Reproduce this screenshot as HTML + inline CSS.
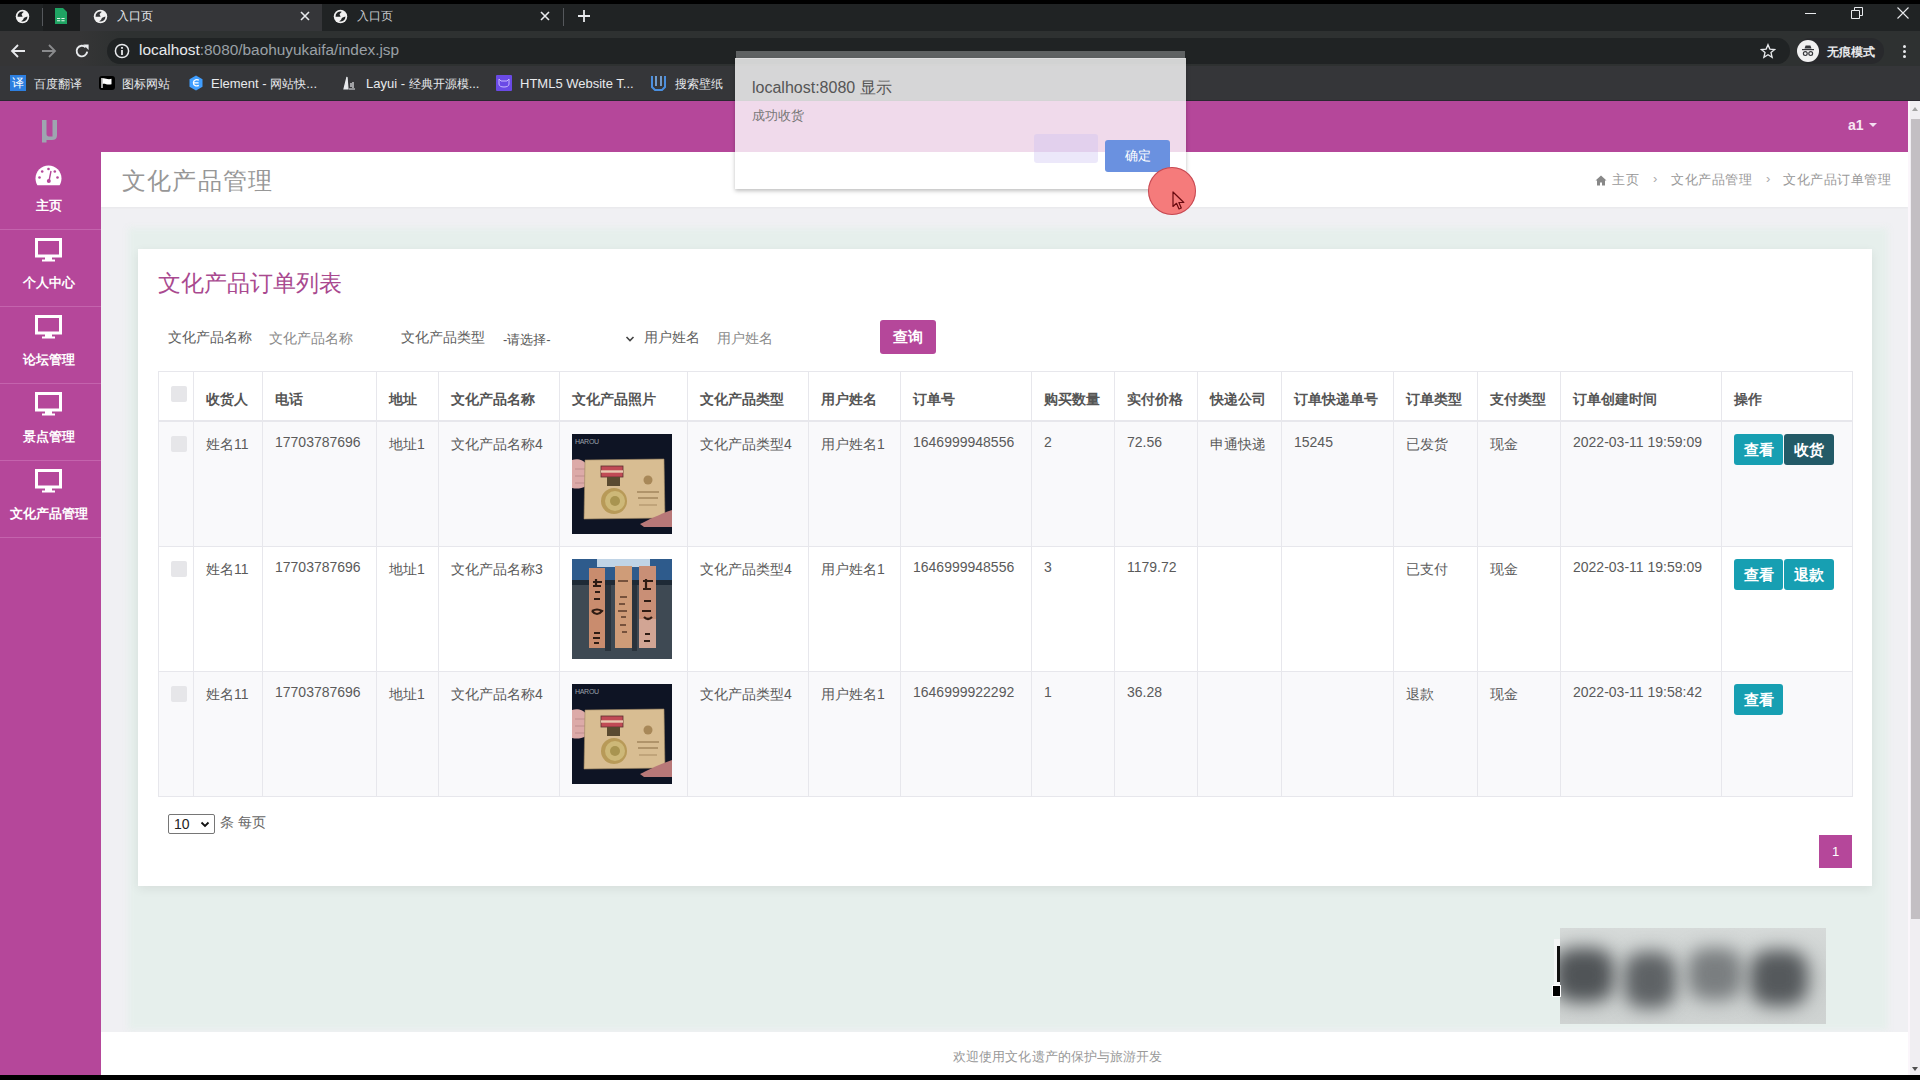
<!DOCTYPE html>
<html><head><meta charset="utf-8">
<style>
*{box-sizing:border-box;margin:0;padding:0}
html,body{width:1920px;height:1080px;overflow:hidden;background:#000;font-family:"Liberation Sans",sans-serif}
.a{position:absolute}
#tabs{left:0;top:4px;width:1920px;height:27px;background:#202324}
#toolbar{left:0;top:31px;width:1920px;height:70px;background:#353639}
#omni{left:107px;top:38px;width:1683px;height:26px;border-radius:13px;background:#202324}
.wt{color:#e8eaed;font-size:12px;white-space:nowrap}
#page{left:0;top:101px;width:1920px;height:974px;background:#f0f0f3;overflow:hidden}
#header{left:0;top:0;width:1908px;height:51px;background:#b5479a}
#side{left:0;top:0;width:101px;height:974px;background:#b5479a}
.sep{left:0;width:101px;height:1px;background:#c463ad}
.sl{left:0;width:97px;text-align:center;font-size:13px;color:#fff;white-space:nowrap;font-weight:bold}
.mon{left:35px}
#titlebar{left:101px;top:51px;width:1807px;height:55px;background:#fff;box-shadow:0 1px 2px rgba(0,0,0,.04)}
#card{left:138px;top:148px;width:1734px;height:637px;background:#fff;box-shadow:0 3px 10px rgba(0,0,0,.07)}
#footer{left:101px;top:931px;width:1807px;height:43px;background:#fff}
#scroll{left:1908px;top:0;width:12px;height:974px;background:#f0eef2}
.bc{top:19px;font-size:13px;color:#999;white-space:nowrap;letter-spacing:0.5px}
.lbl{font-size:14px;color:#606060;white-space:nowrap}
.ph{font-size:14px;color:#8a8a8a;white-space:nowrap}
.th{font-size:14px;font-weight:bold;color:#555;white-space:nowrap;line-height:20px}
.td{font-size:14px;color:#5a5a5a;white-space:nowrap;line-height:20px}
.cb{width:16px;height:16px;background:#e6e6e9;border-radius:2px}
.btn{height:31px;background:#179fb2;color:#fff;font-size:15px;line-height:31px;text-align:center;border-radius:3px;font-weight:bold}
.blob{border-radius:35%;filter:blur(9px)}
</style></head>
<body>
<!-- CHROME -->
<div class="a" id="tabs"></div>
<div class="a" style="left:43px;top:4px;width:37px;height:27px;background:#1b1d1e"></div>
<div class="a" style="left:42px;top:8px;width:1px;height:18px;background:#55585c"></div>
<div class="a" style="left:80px;top:4px;width:242px;height:27px;background:#353639"></div>
<div class="a" style="left:563px;top:8px;width:1px;height:18px;background:#55585c"></div>
<div class="a" id="toolbar"></div>
<div class="a" style="left:0;top:31px;width:1920px;height:35px;background:linear-gradient(90deg,#353536 0,#353536 80px,#2e3131 120px,#2e3131 100%)"></div>
<!-- globe icons -->
<svg class="a" style="left:15px;top:9px" width="15" height="15" viewBox="0 0 16 16"><circle cx="8" cy="8" r="7.2" fill="#f1f1f1"/><path d="M2.7 8.2A5.3 5.3 0 0 1 9.3 2.8C8.6 3.9 7.3 4.5 7.1 5.6C6.9 6.8 8.3 7.4 8 8.2Z M13.3 7.9A5.3 5.3 0 0 1 6.6 13.2C7.5 12.2 9 11.6 9.1 10.4C9.2 9.2 11.2 8.6 13.3 7.9Z" fill="#202324"/></svg>
<svg class="a" style="left:93px;top:9px" width="15" height="15" viewBox="0 0 16 16"><circle cx="8" cy="8" r="7.2" fill="#f1f1f1"/><path d="M2.7 8.2A5.3 5.3 0 0 1 9.3 2.8C8.6 3.9 7.3 4.5 7.1 5.6C6.9 6.8 8.3 7.4 8 8.2Z M13.3 7.9A5.3 5.3 0 0 1 6.6 13.2C7.5 12.2 9 11.6 9.1 10.4C9.2 9.2 11.2 8.6 13.3 7.9Z" fill="#353639"/></svg>
<svg class="a" style="left:333px;top:9px" width="15" height="15" viewBox="0 0 16 16"><circle cx="8" cy="8" r="7.2" fill="#f1f1f1"/><path d="M2.7 8.2A5.3 5.3 0 0 1 9.3 2.8C8.6 3.9 7.3 4.5 7.1 5.6C6.9 6.8 8.3 7.4 8 8.2Z M13.3 7.9A5.3 5.3 0 0 1 6.6 13.2C7.5 12.2 9 11.6 9.1 10.4C9.2 9.2 11.2 8.6 13.3 7.9Z" fill="#202324"/></svg>
<!-- sheets icon -->
<svg class="a" style="left:54px;top:8px" width="14" height="16" viewBox="0 0 14 16"><path d="M1 0 H9 L13 4 V16 H1 Z" fill="#1fa463"/><path d="M3 10.5h3.2M7.4 10.5h3.2M3 12.8h3.2M7.4 12.8h3.2" stroke="#e6f4ea" stroke-width="1.1"/></svg>
<div class="a wt" style="left:117px;top:8px;font-size:12px">入口页</div>
<div class="a wt" style="left:357px;top:8px;font-size:12px;color:#c9cbce">入口页</div>
<svg class="a" style="left:300px;top:11px" width="10" height="10" viewBox="0 0 10 10"><path d="M1 1L9 9M9 1L1 9" stroke="#e8eaed" stroke-width="1.6"/></svg>
<svg class="a" style="left:540px;top:11px" width="10" height="10" viewBox="0 0 10 10"><path d="M1 1L9 9M9 1L1 9" stroke="#e8eaed" stroke-width="1.6"/></svg>
<svg class="a" style="left:577px;top:9px" width="14" height="14" viewBox="0 0 14 14"><path d="M7 1V13M1 7H13" stroke="#e8eaed" stroke-width="1.8"/></svg>
<!-- window controls -->
<div class="a" style="left:1805px;top:13px;width:11px;height:1px;background:#e8eaed"></div>
<svg class="a" style="left:1851px;top:7px" width="12" height="12" viewBox="0 0 12 12"><path d="M0.5 3.5h8v8h-8z M3.5 3.5V0.5h8v8h-3" fill="none" stroke="#e8eaed" stroke-width="1"/></svg>
<svg class="a" style="left:1897px;top:7px" width="12" height="12" viewBox="0 0 12 12"><path d="M0.5 0.5L11.5 11.5M11.5 0.5L0.5 11.5" stroke="#e8eaed" stroke-width="1.1"/></svg>
<!-- nav -->
<svg class="a" style="left:10px;top:43px" width="16" height="16" viewBox="0 0 16 16"><path d="M15 8H2M8 2L2 8L8 14" fill="none" stroke="#e8eaed" stroke-width="1.8"/></svg>
<svg class="a" style="left:41px;top:43px" width="16" height="16" viewBox="0 0 16 16"><path d="M1 8H14M8 2L14 8L8 14" fill="none" stroke="#8a8b8d" stroke-width="1.8"/></svg>
<svg class="a" style="left:74px;top:43px" width="16" height="16" viewBox="0 0 16 16"><path d="M13.2 8.6A5.3 5.3 0 1 1 11.6 4.2" fill="none" stroke="#e8eaed" stroke-width="1.9"/><path d="M9.2 1.6H14.6V7Z" fill="#e8eaed"/></svg>
<div class="a" id="omni"></div>
<svg class="a" style="left:114px;top:43px" width="16" height="16" viewBox="0 0 16 16"><circle cx="8" cy="8" r="6.6" fill="none" stroke="#e8eaed" stroke-width="1.5"/><rect x="7.1" y="7" width="1.8" height="5" fill="#e8eaed"/><rect x="7.1" y="4" width="1.8" height="1.8" fill="#e8eaed"/></svg>
<div class="a" style="left:139px;top:41px;font-size:15.4px;color:#e8eaed;white-space:nowrap">localhost<span style="color:#9aa0a6">:8080/baohuyukaifa/index.jsp</span></div>
<svg class="a" style="left:1760px;top:43px" width="16" height="16" viewBox="0 0 24 24"><path d="M12 2.5l2.8 6.6 7.2.6-5.5 4.7 1.7 7-6.2-3.8-6.2 3.8 1.7-7L2 9.7l7.2-.6z" fill="none" stroke="#e8eaed" stroke-width="2"/></svg>
<div class="a" style="left:1797px;top:38px;width:87px;height:26px;border-radius:13px;background:#28292c"></div>
<svg class="a" style="left:1797px;top:40px" width="22" height="22" viewBox="0 0 22 22"><circle cx="11" cy="11" r="11" fill="#f1f1f1"/><path d="M7.5 8.6L8.6 5.6H13.4L14.5 8.6Z" fill="#35363a"/><rect x="5" y="9" width="12" height="1.2" fill="#35363a"/><circle cx="8.3" cy="13.6" r="1.9" fill="none" stroke="#35363a" stroke-width="1.2"/><circle cx="13.7" cy="13.6" r="1.9" fill="none" stroke="#35363a" stroke-width="1.2"/></svg>
<div class="a wt" style="left:1827px;top:44px;font-size:12px;font-weight:bold">无痕模式</div>
<div class="a" style="left:1903px;top:45px;width:3px;height:3px;border-radius:2px;background:#e8eaed"></div>
<div class="a" style="left:1903px;top:50px;width:3px;height:3px;border-radius:2px;background:#e8eaed"></div>
<div class="a" style="left:1903px;top:55px;width:3px;height:3px;border-radius:2px;background:#e8eaed"></div>
<!-- bookmarks -->
<div class="a" style="left:10px;top:75px;width:16px;height:16px;background:#2d7fe0;color:#fff;font-size:12px;line-height:16px;text-align:center">译</div>
<div class="a wt" style="left:34px;top:76px">百度翻译</div>
<svg class="a" style="left:99px;top:75px" width="16" height="16" viewBox="0 0 16 16"><rect x="0" y="1" width="16" height="14" rx="3" fill="#000"/><path d="M3 3V13" stroke="#fff" stroke-width="1.3"/><path d="M3.6 3.5C6 2.5 8 5 12.5 3.8V9.2C8 10.4 6 8 3.6 9Z" fill="#fff"/></svg>
<div class="a wt" style="left:122px;top:76px">图标网站</div>
<svg class="a" style="left:188px;top:75px" width="16" height="16" viewBox="0 0 16 16"><path d="M8 0.5L14.5 4.2V11.8L8 15.5L1.5 11.8V4.2Z" fill="#409eff"/><path d="M10.8 5.3C9.2 4.1 5.6 4.6 5.4 7.6C5.2 10.6 8.6 11.6 10.8 10.4M6 7.9H10.6" fill="none" stroke="#fff" stroke-width="1.3"/></svg>
<div class="a wt" style="left:211px;top:76px"><span style="font-size:13px">Element - </span>网站快<span style="font-size:13px">...</span></div>
<svg class="a" style="left:342px;top:76px" width="16" height="14" viewBox="0 0 16 14"><path d="M2 13L5 1L6 13Z M7 13H13 M9 7V11 M11 6V12" fill="#e8eaed" stroke="#e8eaed" stroke-width="1.2"/></svg>
<div class="a wt" style="left:366px;top:76px"><span style="font-size:13px">Layui - </span>经典开源模<span style="font-size:13px">...</span></div>
<div class="a" style="left:496px;top:75px;width:16px;height:16px;background:#6a4ae6;border-radius:1px"></div>
<svg class="a" style="left:498px;top:78px" width="12" height="10" viewBox="0 0 12 10"><path d="M1 1L3 3H9L11 1V6C11 8 9 9 6 9S1 8 1 6Z" fill="none" stroke="#c8b8ff" stroke-width="1"/></svg>
<div class="a wt" style="left:520px;top:76px"><span style="font-size:13px">HTML5 Website T...</span></div>
<svg class="a" style="left:650px;top:75px" width="17" height="16" viewBox="0 0 17 16"><path d="M2 1V12L5 15H12L15 12V1" fill="none" stroke="#4a8fe0" stroke-width="2"/><path d="M6 1V11M11 1V11" stroke="#7fb5f0" stroke-width="1.6"/></svg>
<div class="a wt" style="left:675px;top:76px">搜索壁纸</div>
<div class="a" style="left:0;top:100px;width:1920px;height:1px;background:#2a2830"></div>
<!-- PAGE -->
<div class="a" id="page">
  <div class="a" id="header"></div>
  <div class="a" id="side"></div>
  <!-- logo -->
  <svg class="a" style="left:40px;top:18px" width="20" height="24" viewBox="0 0 20 24"><path d="M2 1H6.5V15C6.5 17 8 17.5 10 17.5H12.5V1H17V16.5C17 19.5 15 21 12 21H6.5V23.5H2Z" fill="#9ea5b0"/></svg>
  <!-- sidebar separators -->
  <div class="a sep" style="top:128px"></div>
  <div class="a sep" style="top:205px"></div>
  <div class="a sep" style="top:282px"></div>
  <div class="a sep" style="top:359px"></div>
  <div class="a sep" style="top:436px"></div>
  <!-- dashboard icon -->
  <svg class="a" style="left:35px;top:64px" width="27" height="21" viewBox="0 0 27 21"><path d="M13.5 0.5C6.3 0.5 0.5 6.3 0.5 13.5C0.5 16 1.2 18.3 2.4 20.3H24.6C25.8 18.3 26.5 16 26.5 13.5C26.5 6.3 20.7 0.5 13.5 0.5Z" fill="#fff"/><circle cx="13.5" cy="4" r="1.3" fill="#b5479a"/><circle cx="7.2" cy="6.5" r="1.3" fill="#b5479a"/><circle cx="19.8" cy="6.5" r="1.3" fill="#b5479a"/><circle cx="4.5" cy="12.5" r="1.3" fill="#b5479a"/><circle cx="22.5" cy="12.5" r="1.3" fill="#b5479a"/><path d="M16 6L14.2 15" stroke="#b5479a" stroke-width="1.4"/><circle cx="13.8" cy="16" r="2" fill="#b5479a"/></svg>
  <div class="a sl" style="top:96px">主页</div>
  <svg class="a mon" style="top:137px" width="27" height="24" viewBox="0 0 27 24"><path d="M1.5 1.5H25.5V18H1.5Z" fill="none" stroke="#fff" stroke-width="3"/><path d="M10 18H17V21.5H20V23.5H7V21.5H10Z" fill="#fff"/></svg>
  <div class="a sl" style="top:173px">个人中心</div>
  <svg class="a mon" style="top:214px" width="27" height="24" viewBox="0 0 27 24"><path d="M1.5 1.5H25.5V18H1.5Z" fill="none" stroke="#fff" stroke-width="3"/><path d="M10 18H17V21.5H20V23.5H7V21.5H10Z" fill="#fff"/></svg>
  <div class="a sl" style="top:250px">论坛管理</div>
  <svg class="a mon" style="top:291px" width="27" height="24" viewBox="0 0 27 24"><path d="M1.5 1.5H25.5V18H1.5Z" fill="none" stroke="#fff" stroke-width="3"/><path d="M10 18H17V21.5H20V23.5H7V21.5H10Z" fill="#fff"/></svg>
  <div class="a sl" style="top:327px">景点管理</div>
  <svg class="a mon" style="top:368px" width="27" height="24" viewBox="0 0 27 24"><path d="M1.5 1.5H25.5V18H1.5Z" fill="none" stroke="#fff" stroke-width="3"/><path d="M10 18H17V21.5H20V23.5H7V21.5H10Z" fill="#fff"/></svg>
  <div class="a sl" style="top:404px">文化产品管理</div>
  <!-- header right -->
  <div class="a" style="left:1848px;top:16px;font-size:14px;font-weight:bold;color:#f8e6f3">a1</div>
  <div class="a" style="left:1869px;top:22px;width:0;height:0;border-left:4.5px solid transparent;border-right:4.5px solid transparent;border-top:4.5px solid #f3dff0"></div>
  <!-- title bar -->
  <div class="a" style="left:128px;top:127px;width:1760px;height:802px;background:#e6efec;filter:blur(3px)"></div>
  <div class="a" id="titlebar">
    <div class="a" style="left:21px;top:13px;font-size:24px;color:#979797;font-weight:300;letter-spacing:1.2px">文化产品管理</div>
    <svg class="a" style="left:1494px;top:23px" width="12" height="11" viewBox="0 0 12 11"><path d="M6 0.5L0.5 5.5H2V10.5H5V7.5H7V10.5H10V5.5H11.5Z" fill="#888"/></svg>
    <div class="a bc" style="left:1511px">主页</div>
    <div class="a bc" style="left:1552px;color:#aaa">&#8250;</div>
    <div class="a bc" style="left:1570px">文化产品管理</div>
    <div class="a bc" style="left:1665px;color:#aaa">&#8250;</div>
    <div class="a bc" style="left:1682px">文化产品订单管理</div>
  </div>
  <!-- card -->
  <div class="a" id="card">
    <div class="a" style="left:20px;top:19px;font-size:23px;color:#a9498f">文化产品订单列表</div>
    <div class="a lbl" style="left:30px;top:80px">文化产品名称</div>
    <div class="a ph" style="left:131px;top:81px">文化产品名称</div>
    <div class="a lbl" style="left:263px;top:80px">文化产品类型</div>
    <div class="a" style="left:365px;top:82px;font-size:13px;color:#555">-请选择-</div>
    <svg class="a" style="left:487px;top:86px" width="10" height="8" viewBox="0 0 10 8"><path d="M1.5 2L5 5.5L8.5 2" fill="none" stroke="#444" stroke-width="1.6"/></svg>
    <div class="a lbl" style="left:506px;top:80px">用户姓名</div>
    <div class="a ph" style="left:579px;top:81px">用户姓名</div>
    <div class="a" style="left:742px;top:71px;width:56px;height:34px;background:#b5479a;border-radius:3px;color:#fff;font-size:15px;font-weight:bold;line-height:34px;text-align:center">查询</div>
    <div class="a" style="left:20px;top:172px;width:1694px;height:125px;background:#f9f9fb"></div>
<div class="a" style="left:20px;top:422px;width:1694px;height:125px;background:#f9f9fb"></div>
<div class="a" style="left:20px;top:122px;width:1695px;height:1px;background:#e7e7ec"></div>
<div class="a" style="left:20px;top:171px;width:1695px;height:2px;background:#e7e7ec"></div>
<div class="a" style="left:20px;top:297px;width:1695px;height:1px;background:#e7e7ec"></div>
<div class="a" style="left:20px;top:422px;width:1695px;height:1px;background:#e7e7ec"></div>
<div class="a" style="left:20px;top:547px;width:1695px;height:1px;background:#e7e7ec"></div>
<div class="a" style="left:20px;top:122px;width:1px;height:425px;background:#e7e7ec"></div>
<div class="a" style="left:55px;top:122px;width:1px;height:425px;background:#e7e7ec"></div>
<div class="a" style="left:124px;top:122px;width:1px;height:425px;background:#e7e7ec"></div>
<div class="a" style="left:238px;top:122px;width:1px;height:425px;background:#e7e7ec"></div>
<div class="a" style="left:300px;top:122px;width:1px;height:425px;background:#e7e7ec"></div>
<div class="a" style="left:421px;top:122px;width:1px;height:425px;background:#e7e7ec"></div>
<div class="a" style="left:549px;top:122px;width:1px;height:425px;background:#e7e7ec"></div>
<div class="a" style="left:670px;top:122px;width:1px;height:425px;background:#e7e7ec"></div>
<div class="a" style="left:762px;top:122px;width:1px;height:425px;background:#e7e7ec"></div>
<div class="a" style="left:893px;top:122px;width:1px;height:425px;background:#e7e7ec"></div>
<div class="a" style="left:976px;top:122px;width:1px;height:425px;background:#e7e7ec"></div>
<div class="a" style="left:1059px;top:122px;width:1px;height:425px;background:#e7e7ec"></div>
<div class="a" style="left:1143px;top:122px;width:1px;height:425px;background:#e7e7ec"></div>
<div class="a" style="left:1255px;top:122px;width:1px;height:425px;background:#e7e7ec"></div>
<div class="a" style="left:1339px;top:122px;width:1px;height:425px;background:#e7e7ec"></div>
<div class="a" style="left:1422px;top:122px;width:1px;height:425px;background:#e7e7ec"></div>
<div class="a" style="left:1583px;top:122px;width:1px;height:425px;background:#e7e7ec"></div>
<div class="a" style="left:1714px;top:122px;width:1px;height:425px;background:#e7e7ec"></div>
<div class="a cb" style="left:33px;top:137px"></div>
<div class="a th" style="left:68px;top:140px">收货人</div>
<div class="a th" style="left:137px;top:140px">电话</div>
<div class="a th" style="left:251px;top:140px">地址</div>
<div class="a th" style="left:313px;top:140px">文化产品名称</div>
<div class="a th" style="left:434px;top:140px">文化产品照片</div>
<div class="a th" style="left:562px;top:140px">文化产品类型</div>
<div class="a th" style="left:683px;top:140px">用户姓名</div>
<div class="a th" style="left:775px;top:140px">订单号</div>
<div class="a th" style="left:906px;top:140px">购买数量</div>
<div class="a th" style="left:989px;top:140px">实付价格</div>
<div class="a th" style="left:1072px;top:140px">快递公司</div>
<div class="a th" style="left:1156px;top:140px">订单快递单号</div>
<div class="a th" style="left:1268px;top:140px">订单类型</div>
<div class="a th" style="left:1352px;top:140px">支付类型</div>
<div class="a th" style="left:1435px;top:140px">订单创建时间</div>
<div class="a th" style="left:1596px;top:140px">操作</div>
<div class="a cb" style="left:33px;top:187px"></div>
<div class="a td" style="left:68px;top:185px">姓名11</div>
<div class="a td" style="left:137px;top:183px">17703787696</div>
<div class="a td" style="left:251px;top:185px">地址1</div>
<div class="a td" style="left:313px;top:185px">文化产品名称4</div>
<div class="a" style="left:434px;top:185px;width:100px;height:100px"><svg width="100" height="100" viewBox="0 0 100 100" style="display:block"><rect width="100" height="100" fill="#0e1424"/><text x="3" y="10" font-size="7" fill="#9aa0a8" font-family="Liberation Sans" letter-spacing="-0.3">HAROU</text><path d="M0 26C5 24 12 26 14 30L14 52C9 55 4 55 0 54Z" fill="#dcaaa8"/><path d="M3 35H15M3 42H15M3 49H14" stroke="#b88888" stroke-width=".8"/><path d="M13 26L92 25L93 84L12 85Z" fill="#d8bd92" stroke="#9c8460" stroke-width=".6"/><rect x="29" y="32" width="22" height="11" fill="#c04a55" stroke="#5a3030" stroke-width=".8"/><rect x="29" y="36.3" width="22" height="2.4" fill="#e8c8b0"/><rect x="35" y="43" width="13" height="9" fill="#5a4a30"/><circle cx="42" cy="67" r="13" fill="#b89a58"/><circle cx="43" cy="67" r="10" fill="#cdb878"/><circle cx="43" cy="67" r="5" fill="#a89450"/><circle cx="76" cy="46" r="4.5" fill="#a88858"/><rect x="65" y="57" width="22" height="2" fill="#b0946a"/><rect x="66" y="63" width="20" height="2" fill="#b0946a"/><rect x="67" y="70" width="18" height="2" fill="#c0a47a"/><path d="M68 90C76 86 88 80 100 76V93H72Z" fill="#b87878"/></svg></div>
<div class="a td" style="left:562px;top:185px">文化产品类型4</div>
<div class="a td" style="left:683px;top:185px">用户姓名1</div>
<div class="a td" style="left:775px;top:183px">1646999948556</div>
<div class="a td" style="left:906px;top:183px">2</div>
<div class="a td" style="left:989px;top:183px">72.56</div>
<div class="a td" style="left:1072px;top:185px">申通快递</div>
<div class="a td" style="left:1156px;top:183px">15245</div>
<div class="a td" style="left:1268px;top:185px">已发货</div>
<div class="a td" style="left:1352px;top:185px">现金</div>
<div class="a td" style="left:1435px;top:183px">2022-03-11 19:59:09</div>
<div class="a btn" style="left:1596px;top:185px;width:49px">查看</div>
<div class="a btn" style="left:1646px;top:185px;width:50px;background:#235a67">收货</div>
<div class="a cb" style="left:33px;top:312px"></div>
<div class="a td" style="left:68px;top:310px">姓名11</div>
<div class="a td" style="left:137px;top:308px">17703787696</div>
<div class="a td" style="left:251px;top:310px">地址1</div>
<div class="a td" style="left:313px;top:310px">文化产品名称3</div>
<div class="a" style="left:434px;top:310px;width:100px;height:100px"><svg width="100" height="100" viewBox="0 0 100 100" style="display:block"><rect width="100" height="100" fill="#3e4953"/><rect width="100" height="21" fill="#2e5b8c"/><rect x="0" y="21" width="100" height="5" fill="#1e2a36"/><rect x="25" y="0" width="53" height="8" fill="#c0d4e6"/><rect x="33" y="26" width="6" height="66" fill="#2a333c"/><rect x="60" y="26" width="5" height="66" fill="#2a333c"/><rect x="17" y="9" width="16" height="80" fill="#c98c6e"/><rect x="43" y="7" width="17" height="82" fill="#cf9c78"/><rect x="67" y="7" width="17" height="82" fill="#c98f76"/><rect x="67" y="60" width="17" height="29" fill="#d8b4a8" opacity=".6"/><path d="M21 23h9M24 20v8M21 27h8M23 33h5M22 40h6M20 52q5-3 10 0q-5 6-10 0M22 74h6M21 79h7M22 84h5" stroke="#2e1c14" stroke-width="2.2" fill="none"/><path d="M46 22h10M48 38h7M47 45h6M46 52h9M49 58h5M48 66h6M50 73h5" stroke="#5a3a28" stroke-width="1.4"/><path d="M71 22h10M74 20v10M71 30h8M72 42h7M70 52h9M72 58q4 4 8 0M73 75h5M72 82h6" stroke="#2e1c14" stroke-width="2.2" fill="none"/></svg></div>
<div class="a td" style="left:562px;top:310px">文化产品类型4</div>
<div class="a td" style="left:683px;top:310px">用户姓名1</div>
<div class="a td" style="left:775px;top:308px">1646999948556</div>
<div class="a td" style="left:906px;top:308px">3</div>
<div class="a td" style="left:989px;top:308px">1179.72</div>
<div class="a td" style="left:1268px;top:310px">已支付</div>
<div class="a td" style="left:1352px;top:310px">现金</div>
<div class="a td" style="left:1435px;top:308px">2022-03-11 19:59:09</div>
<div class="a btn" style="left:1596px;top:310px;width:49px">查看</div>
<div class="a btn" style="left:1646px;top:310px;width:50px">退款</div>
<div class="a cb" style="left:33px;top:437px"></div>
<div class="a td" style="left:68px;top:435px">姓名11</div>
<div class="a td" style="left:137px;top:433px">17703787696</div>
<div class="a td" style="left:251px;top:435px">地址1</div>
<div class="a td" style="left:313px;top:435px">文化产品名称4</div>
<div class="a" style="left:434px;top:435px;width:100px;height:100px"><svg width="100" height="100" viewBox="0 0 100 100" style="display:block"><rect width="100" height="100" fill="#0e1424"/><text x="3" y="10" font-size="7" fill="#9aa0a8" font-family="Liberation Sans" letter-spacing="-0.3">HAROU</text><path d="M0 26C5 24 12 26 14 30L14 52C9 55 4 55 0 54Z" fill="#dcaaa8"/><path d="M3 35H15M3 42H15M3 49H14" stroke="#b88888" stroke-width=".8"/><path d="M13 26L92 25L93 84L12 85Z" fill="#d8bd92" stroke="#9c8460" stroke-width=".6"/><rect x="29" y="32" width="22" height="11" fill="#c04a55" stroke="#5a3030" stroke-width=".8"/><rect x="29" y="36.3" width="22" height="2.4" fill="#e8c8b0"/><rect x="35" y="43" width="13" height="9" fill="#5a4a30"/><circle cx="42" cy="67" r="13" fill="#b89a58"/><circle cx="43" cy="67" r="10" fill="#cdb878"/><circle cx="43" cy="67" r="5" fill="#a89450"/><circle cx="76" cy="46" r="4.5" fill="#a88858"/><rect x="65" y="57" width="22" height="2" fill="#b0946a"/><rect x="66" y="63" width="20" height="2" fill="#b0946a"/><rect x="67" y="70" width="18" height="2" fill="#c0a47a"/><path d="M68 90C76 86 88 80 100 76V93H72Z" fill="#b87878"/></svg></div>
<div class="a td" style="left:562px;top:435px">文化产品类型4</div>
<div class="a td" style="left:683px;top:435px">用户姓名1</div>
<div class="a td" style="left:775px;top:433px">1646999922292</div>
<div class="a td" style="left:906px;top:433px">1</div>
<div class="a td" style="left:989px;top:433px">36.28</div>
<div class="a td" style="left:1268px;top:435px">退款</div>
<div class="a td" style="left:1352px;top:435px">现金</div>
<div class="a td" style="left:1435px;top:433px">2022-03-11 19:58:42</div>
<div class="a btn" style="left:1596px;top:435px;width:49px">查看</div>
    <!-- pagination -->
    <div class="a" style="left:30px;top:565px;width:47px;height:20px;border:1px solid #767676;border-radius:2px;background:#fff;font-size:14px;line-height:18px;padding-left:5px;color:#222">10</div>
    <svg class="a" style="left:62px;top:572px" width="10" height="7" viewBox="0 0 10 7"><path d="M1.5 1.5L5 5L8.5 1.5" fill="none" stroke="#111" stroke-width="1.8"/></svg>
    <div class="a" style="left:82px;top:565px;font-size:14px;color:#666">条 每页</div>
    <div class="a" style="left:1681px;top:586px;width:33px;height:33px;background:#b5479a;color:#fff;font-size:13px;line-height:33px;text-align:center">1</div>
  </div>
  <!-- watermark -->
  <div class="a" style="left:1560px;top:827px;width:266px;height:96px;background:linear-gradient(#d6dad9,#ccd0cf 50%,#cfd3d2);overflow:hidden">
    <div class="a blob" style="left:-6px;top:20px;width:60px;height:54px;background:#505457"></div>
    <div class="a blob" style="left:64px;top:24px;width:52px;height:56px;background:#5e6265"></div>
    <div class="a blob" style="left:128px;top:20px;width:54px;height:52px;background:#7a7e80"></div>
    <div class="a blob" style="left:190px;top:22px;width:58px;height:56px;background:#55595c"></div>
  </div>
  <div class="a" style="left:1553px;top:885px;width:7px;height:10px;background:#000;box-shadow:0 0 0 1px #fff"></div>
  <div class="a" style="left:1554px;top:838px;width:6px;height:46px;background:#f4f6f6"></div>
  <div class="a" style="left:1557px;top:845px;width:3px;height:36px;background:#111"></div>
  <!-- footer -->
  <div class="a" id="footer"><div class="a" style="left:852px;top:16px;font-size:13px;color:#999;white-space:nowrap;letter-spacing:0.1px">欢迎使用文化遗产的保护与旅游开发</div></div>
  <!-- scrollbar -->
  
  <div class="a" id="scroll">
    <div class="a" style="left:0;top:0;width:2px;height:974px;background:#fbf6fb"></div>
    <div class="a" style="left:3px;top:18px;width:9px;height:800px;background:#c3bfc3"></div>
    <div class="a" style="left:4px;top:6px;width:0;height:0;border-left:3.5px solid transparent;border-right:3.5px solid transparent;border-bottom:4px solid #a3a3a3"></div>
    <div class="a" style="left:4px;top:966px;width:0;height:0;border-left:3.5px solid transparent;border-right:3.5px solid transparent;border-top:4px solid #505050"></div>
  </div>
</div>
<div class="a" style="left:0;top:1075px;width:1920px;height:5px;background:#000"></div>
<!-- dialog -->
<div class="a" style="left:736px;top:51px;width:449px;height:8px;background:#5f6263"></div>
<div class="a" style="left:735px;top:58px;width:451px;height:131px;background:rgba(255,255,255,0.8);box-shadow:0 2px 4px rgba(0,0,0,.25)">
  <div class="a" style="left:17px;top:20px;font-size:16px;color:#555;white-space:nowrap">localhost:8080 显示</div>
  <div class="a" style="left:17px;top:49px;font-size:13px;color:#777">成功收货</div>
  <div class="a" style="left:299px;top:76px;width:64px;height:29px;background:rgba(200,190,240,0.35);border-radius:3px"></div>
  <div class="a" style="left:370px;top:82px;width:65px;height:32px;background:#6a91e0;border-radius:3px;color:#fff;font-size:13px;line-height:32px;text-align:center">确定</div>
</div>
<!-- cursor highlight -->
<div class="a" style="left:1148px;top:167px;width:48px;height:48px;border-radius:50%;background:#f57b7b;box-shadow:inset 0 0 0 1px rgba(150,20,40,.5)"></div>
<svg class="a" style="left:1172px;top:191px" width="14" height="20" viewBox="0 0 14 20"><path d="M1 1V15.5L4.5 12.3L7 18L9.3 17L6.9 11.5H11.8Z" fill="none" stroke="#6a0a10" stroke-width="1.2" stroke-linejoin="round"/></svg>
</body></html>
